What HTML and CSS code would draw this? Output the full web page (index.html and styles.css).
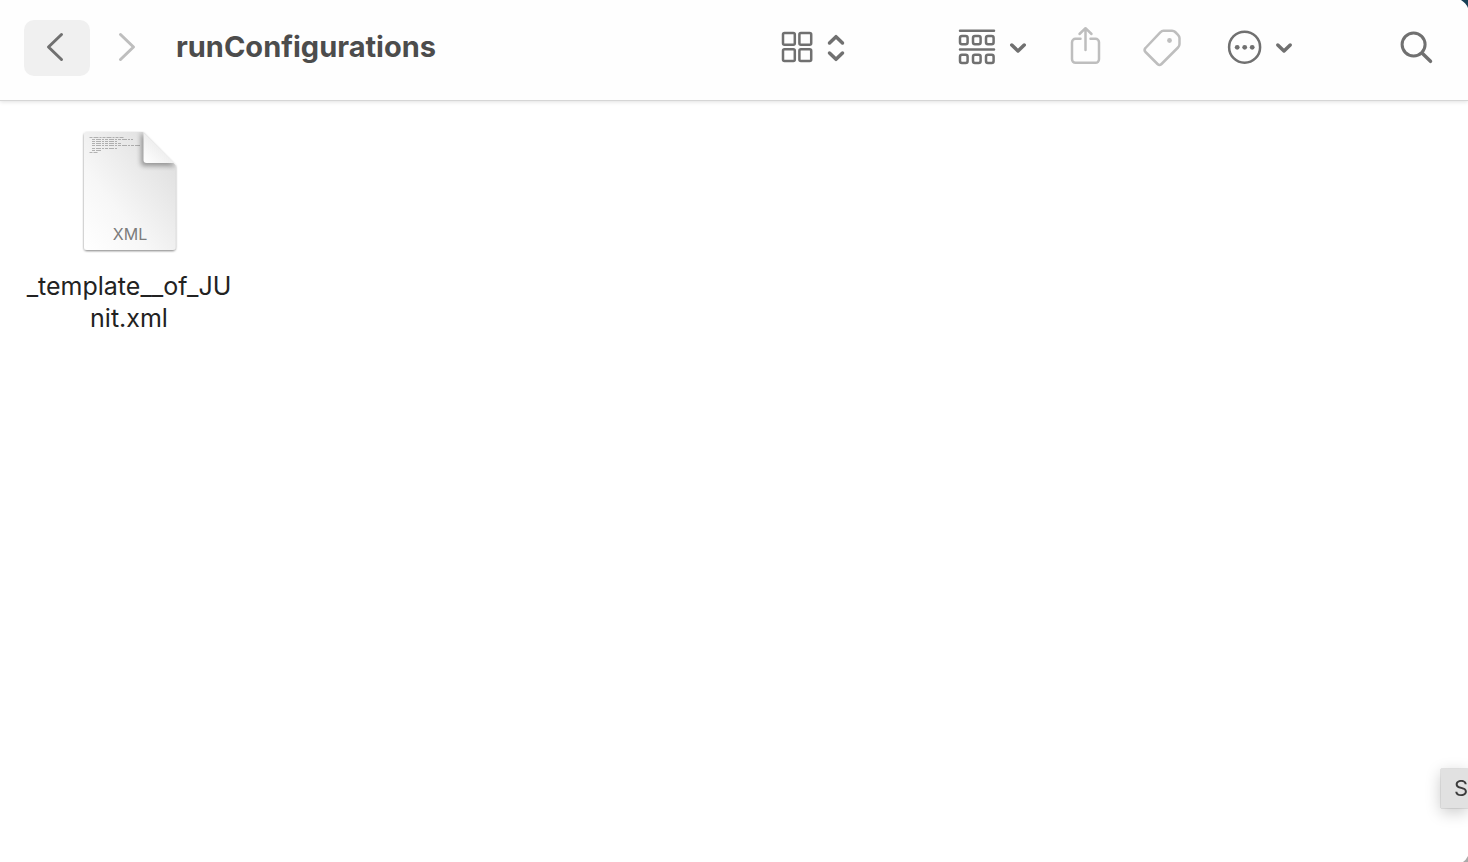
FILE: index.html
```
<!DOCTYPE html>
<html lang="en">
<head>
  <meta charset="UTF-8">
  <title>runConfigurations</title>
  <link rel="stylesheet" href="styles.css">
</head>
<body>
  <header class="toolbar">
    <button class="nav back" type="button" aria-label="Back">
      <svg width="66" height="56" viewBox="24 20 66 56"><path d="M61.5 34.500 48.500 47l13 12.500"/></svg>
    </button>
    <button class="nav forward" type="button" aria-label="Forward" disabled>
      <svg width="66" height="56" viewBox="94 20 66 56"><path d="M120.500 34.500l13 12.500-13 12.500"/></svg>
    </button>
    <h1>runConfigurations</h1>

    <div class="tools">
      <button class="view" type="button" aria-label="View" aria-haspopup="menu">
        <svg width="66" height="56" viewBox="780 20 66 56">
          <rect x="783" y="33" width="11.800" height="11.800" rx="1.500"/>
          <rect x="799.400" y="33" width="11.800" height="11.800" rx="1.500"/>
          <rect x="783" y="49.200" width="11.800" height="11.800" rx="1.500"/>
          <rect x="799.400" y="49.200" width="11.800" height="11.800" rx="1.500"/>
          <path class="thick" d="M829.500 43l6.500-6.300 6.500 6.300M829.500 53l6.500 6.300 6.500-6.300"/>
        </svg>
      </button>
      <button type="button" aria-label="Group" aria-haspopup="menu">
        <svg width="72" height="56" viewBox="956 20 72 56">
          <path d="M960 30.700h34M960 49.500h34"/>
          <rect x="960" y="36" width="7.600" height="8.200" rx="2"/>
          <rect x="973" y="36" width="7.600" height="8.200" rx="2"/>
          <rect x="986" y="36" width="7.600" height="8.200" rx="2"/>
          <rect x="960" y="54.700" width="7.600" height="8.200" rx="2"/>
          <rect x="973" y="54.700" width="7.600" height="8.200" rx="2"/>
          <rect x="986" y="54.700" width="7.600" height="8.200" rx="2"/>
          <path class="thick" d="M1011.800 45l6.200 6 6.200-6"/>
        </svg>
      </button>
      <button type="button" aria-label="Share" disabled>
        <svg width="34" height="56" viewBox="1068 20 34 56">
          <path d="M1080.500 38.800H1075.500a3.500 3.500 0 0 0-3.500 3.500V59.300a3.500 3.500 0 0 0 3.500 3.500H1095.500a3.500 3.500 0 0 0 3.500-3.500V42.300a3.500 3.500 0 0 0-3.500-3.500H1090.500M1085.500 50V28.500M1079.500 34l6-5.800 6 5.800"/>
        </svg>
      </button>
      <button type="button" aria-label="Tags" disabled>
        <svg width="40" height="56" viewBox="1142 20 40 56">
          <path d="M1163.500 30.800H1172q2 0 3.200 1.200l2.800 2.800q1.500 1.500 1.500 3.200V44q0 2-1.500 3.500L1161.500 64q-2 2-4 0L1145.500 52q-2-2 0-4L1160.500 32.200q1.200-1.400 3-1.400Z"/>
          <circle class="dot" cx="1169.500" cy="40.500" r="2.400"/>
        </svg>
      </button>
      <button type="button" aria-label="Actions" aria-haspopup="menu">
        <svg width="72" height="56" viewBox="1222 20 72 56">
          <circle cx="1244.600" cy="47.200" r="15.500"/>
          <circle class="dot" cx="1237.200" cy="47.300" r="2.400"/>
          <circle class="dot" cx="1244.700" cy="47.300" r="2.400"/>
          <circle class="dot" cx="1252.200" cy="47.300" r="2.400"/>
          <path class="thick" d="M1277.800 45l6.200 6 6.200-6"/>
        </svg>
      </button>
      <button class="search" type="button" aria-label="Search">
        <svg width="36" height="56" viewBox="1398 20 36 56">
          <circle cx="1413.600" cy="44.500" r="11.500"/>
          <path class="thick" d="M1422.500 53.500l8 7.800"/>
        </svg>
      </button>
    </div>
  </header>

  <main class="files">
    <figure class="file">
      <svg class="page" width="100" height="128" viewBox="79 128 100 128" aria-hidden="true">
        <defs>
          <linearGradient id="paper" x1="0" y1="1" x2="1" y2="0">
            <stop offset="0" stop-color="#fff"/>
            <stop offset="0.350" stop-color="#f7f7f7"/>
            <stop offset="1" stop-color="#dadada"/>
          </linearGradient>
          <linearGradient id="fold" x1="0" y1="1" x2="0.500" y2="0.500">
            <stop offset="0" stop-color="#fff"/>
            <stop offset="1" stop-color="#efefef"/>
          </linearGradient>
          <filter id="shade" x="-20%" y="-20%" width="140%" height="140%">
            <feDropShadow dx="0" dy="1" stdDeviation="1.300" flood-opacity="0.500"/>
          </filter>
          <filter id="blur" x="-50%" y="-50%" width="200%" height="200%">
            <feGaussianBlur stdDeviation="2.500"/>
          </filter>
          <clipPath id="sheet">
            <path d="M87 132H143L175.500 165V247q0 3-3 3H87q-3 0-3-3V135q0-3 3-3Z"/>
          </clipPath>
        </defs>
        <path d="M87 132H143L175.500 165V247q0 3-3 3H87q-3 0-3-3V135q0-3 3-3Z" fill="url(#paper)" filter="url(#shade)"/>
        <g clip-path="url(#sheet)">
          <path d="M141 132V163q0 3 3 3H176Z" fill="#000" opacity="0.350" filter="url(#blur)"/>
        </g>
        <path d="M143.500 132.500V160q0 3 3 3H174.500Z" fill="url(#fold)"/>
        <g class="code">
          <path d="M89.500 137.500h34"/>
          <path d="M92 139.500h41"/>
          <path d="M92 141.500h25"/>
          <path d="M92 143.500h29"/>
          <path d="M92 145.500h49"/>
          <path d="M92 148.500h26"/>
          <path d="M92 150.500h9"/>
          <path d="M89.500 152.500h8"/>
        </g>
        <text class="kind" x="130" y="240">XML</text>
      </svg>
      <figcaption>_template__of_JUnit.xml</figcaption>
    </figure>
  </main>

  <div class="tip">S</div>
  <svg class="corner top" width="7" height="8" viewBox="0 0 7 8"><path d="M0 0H7V8Q5 3 0 0Z" fill="#173f55"/></svg>
  <svg class="corner bottom" width="5" height="6" viewBox="0 0 5 6"><path d="M5 0V6H0Q3 4 5 0Z" fill="#aaa"/></svg>
</body>
</html>
```
FILE: styles.css
```
body {
  margin: 0;
  min-height: 100vh;
  font-family: Inter, "Liberation Sans", sans-serif;
  background: #fff;
  overflow: hidden;
}
.toolbar {
  display: flex;
  align-items: flex-start;
  padding: 20px 34px 24px 24px;
  background: #fefefe;
  border-bottom: 1px solid #d6d6d6;
  box-shadow: 0 1px 4px rgba(0, 0, 0, 0.12);
}
button {
  flex: none;
  padding: 0;
  border: none;
  border-radius: 10px;
  background: none;
  color: #707070;
}
button:disabled {
  color: #bebebe;
}
button svg {
  display: block;
  fill: none;
  stroke: currentColor;
  stroke-width: 2.5;
  stroke-linecap: round;
  stroke-linejoin: round;
}
.nav svg {
  stroke-width: 3;
}
.search svg {
  stroke-width: 3;
}
button .thick {
  stroke-width: 3.5;
}
button .dot {
  fill: currentColor;
  stroke: none;
}
.back {
  background: #f0f0f0;
}
.forward {
  margin-left: 4px;
}
h1 {
  margin: 0 0 0 16px;
  font-size: 29px;
  line-height: 54px;
  font-weight: 700;
  color: #4c4c4c;
}
.tools {
  display: flex;
  gap: 40px;
  margin-left: auto;
}
.view {
  margin-right: 70px;
}
.search {
  margin-left: 64px;
}
.files {
  display: flex;
  padding: 27px 20px;
}
.file {
  width: 218px;
  margin: 0;
  text-align: center;
}
.page {
  display: block;
  margin: 0 auto;
}
.code path {
  stroke: #555;
  stroke-width: 1;
  stroke-dasharray: 3 1 5 1 2 1;
  opacity: 0.4;
}
.kind {
  font-size: 16px;
  fill: #7c7c7c;
  text-anchor: middle;
}
figcaption {
  margin-top: 14px;
  padding: 0 4px;
  font-size: 25px;
  line-height: 32px;
  color: #222;
  word-break: break-all;
}
.tip {
  position: fixed;
  right: 0;
  bottom: 54px;
  box-sizing: border-box;
  width: 27px;
  padding-left: 13px;
  font-size: 22px;
  line-height: 39px;
  color: #3c3c3c;
  background: #e1e1e1;
  box-shadow: 0 0 1px rgba(0, 0, 0, 0.5), 0 4px 16px rgba(0, 0, 0, 0.22);
}
.corner {
  position: fixed;
  right: 0;
}
.top {
  top: 0;
}
.bottom {
  bottom: 0;
}
```
